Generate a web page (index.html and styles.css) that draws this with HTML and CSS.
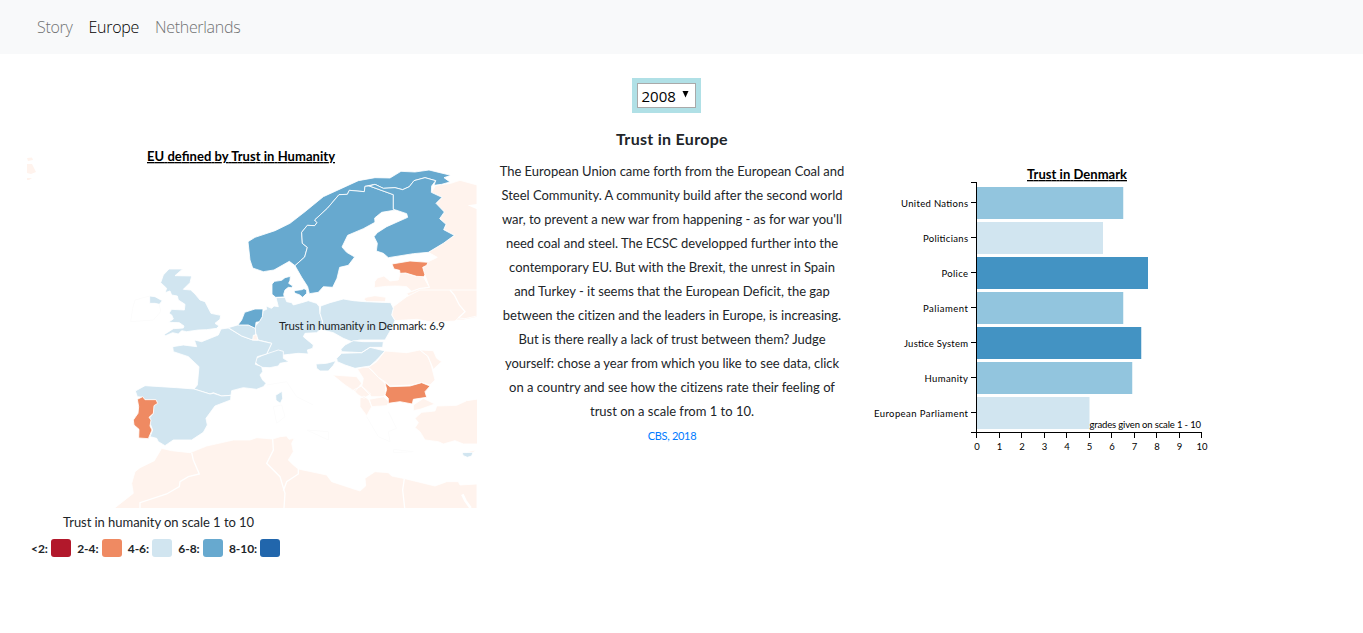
FILE: index.html
```html
<!DOCTYPE html>
<html lang="en">
<head>
<meta charset="utf-8">
<title>Trust in Europe</title>
<link rel="stylesheet" href="styles.css">
</head>
<body>
<nav class="navbar">
  <a class="nav-link">Story</a>
  <a class="nav-link active">Europe</a>
  <a class="nav-link">Netherlands</a>
</nav>
<main class="content">
  <section class="map-column">
    <svg class="map" viewBox="27 143 450 365" width="450" height="365">
      <g transform="translate(240 160) scale(.33333)">
        <path class="none" d="M574 97L587 76L632 70L660 61L711 75V480H560L500 400L540 385L568 382L555 345L548 322L565 305L592 292L565 277L643 226L611 209L618 193L599 176L613 156L588 130L606 112Z"/>
        <path class="sea" d="M683 136L711 132V148Z"/>
        <path class="none" d="M403 383L404 365L412 354L432 348L450 363L475 360L480 340L497 339L530 349L550 350L568 382L540 385L515 394L500 380L470 378L440 379Z"/>
        <path class="none" d="M372 418L378 412L405 407L438 412L436 425L380 425Z"/>
        <path class="high" d="M24 245L45 232L105 212L150 190L195 155L250 110L355 62L405 53L450 54L483 34L525 36L567 30L600 38L633 46L612 53L630 66L605 73L582 76L587 62L555 53L522 62L508 80L488 89L465 83L430 85L405 73L375 79L373 95L328 91L322 103L297 104L262 145L224 180L231 188L224 197L202 196L185 217L187 250L202 262L194 291L165 317L148 304L102 330L70 335L38 324L30 300Z"/>
        <path class="high" d="M165 317L194 291L202 262L187 250L185 217L202 196L224 197L231 188L224 180L262 145L297 104L322 103L328 91L373 95L375 79L388 78L460 104V148L467 150L425 157L404 174L405 187L370 206L323 226L306 261L320 277L344 291L325 316L299 322L291 355L278 382L250 380L235 397L208 401L203 380L185 352Z"/>
        <path class="high" d="M388 78L405 73L430 85L465 83L488 89L508 80L522 62L555 53L587 62L575 78L574 97L606 112L588 130L613 156L599 176L618 193L611 209L643 226L610 250L565 277L520 281L445 293L430 280L409 273L412 250L402 230L412 218L440 200L503 172L500 161L467 150L460 148V104Z"/>
        <path class="high" d="M96 372L104 364L125 361L135 353L151 349L150 361L146 370L158 378L155 383L145 382L135 390L131 403L133 411L107 412L96 403ZM162 392L185 389L192 386L200 390V400L188 412L178 404L165 400Z"/>
        <path class="low" d="M456 312L510 303L564 307L560 316L548 322L555 345L550 350L530 349L497 339L480 340L479 331L462 327Z"/>
      </g>
      <g transform="translate(220 290) scale(.33333)">
        <path class="none" d="M520 50L560 20L600 0H771V78L735 86L715 84L705 93L640 97L590 88L525 92L515 75Z"/>
        <path class="sea" d="M708 96L740 87L771 80V130H700Z"/>
        <path class="border" d="M690 0L703 15L718 45L735 65L715 84"/>
        <path class="mid" d="M129 62L140 58L138 48L155 55L162 48L175 50L168 23L195 22L200 35L215 38L220 45L245 38L265 32L290 40L298 50L300 70L308 95L305 115L290 128L255 130L250 140L280 165L278 175L262 180L265 192L235 190L190 195L165 190L140 192L155 160L115 150L108 135L104 110L118 95L127 80Z"/>
        <path class="mid" d="M302 48L330 38L370 27L400 32L435 35L512 38L520 55L515 75L525 92L515 115L495 150H420L395 155L370 145L340 128L308 120V95L300 70Z"/>
        <path class="mid" d="M106 218L108 205L130 195L175 180L190 184V205L207 215L180 220L175 228L150 233L125 232L115 225ZM363 178L375 165L400 152L430 155L490 155L488 172L450 172L425 188L365 185ZM350 205L365 190L425 188L450 172L495 183L470 210L450 228L405 235L375 225L352 215ZM288 222L320 220L348 212L340 226L325 243L300 243L290 235ZM167 316L186 304L188 325L181 340L168 331Z"/>
        <path class="none" d="M470 215L495 183L560 188L600 180L625 200L635 230L640 250L645 270L630 285L605 278L575 285L510 288L495 275L475 262L455 240L445 232ZM600 180L640 182L650 205L665 215L640 238L633 220L622 198Z"/>
        <path class="none" d="M412 237L430 232L445 232L475 262L495 280L498 310L490 320L455 320L425 290L430 265ZM338 255L410 260L425 280L405 305L375 285ZM400 300L425 288L452 312L432 325L415 315ZM448 328L490 320L508 335L500 347L455 350ZM420 325L432 318L447 330L455 350L440 377L420 350ZM580 345L610 325L645 342L600 358L580 362Z"/>
        <path class="low" d="M495 278L510 290L570 288L605 278L630 288L615 305L620 322L580 328L577 342L540 335L505 340V325L495 315L500 298Z"/>
      </g>
      <g transform="translate(120 260) scale(.33333)">
        <path class="mid" d="M147 27L188 27L165 47L215 48L210 68L190 88L212 90L225 102L240 120L255 125L273 160L302 166L300 178L285 190L297 198L290 205L260 209L235 210L200 215L185 212L175 222L158 218L137 227L132 224L160 206L190 204L192 198L178 188L145 187L160 177L155 165L147 160L155 148L193 150L195 133L175 120L172 108L155 105L150 93L135 98L140 85L122 68L130 45ZM89 108L105 110L127 122L118 133L105 130L89 130Z"/>
        <path class="mid" d="M303 207L325 204L365 228L398 240L415 241L455 250L440 282L412 290L406 313L425 320L428 335L420 345L428 360L438 370L430 380L410 388L370 383L335 392L333 406L305 408L280 398L270 402L222 387L232 375L237 320L205 290L160 275L158 260L190 255L230 260L223 240L245 245L295 225Z"/>
        <path class="mid" d="M325 203L356 194L385 195L406 205L407 222L398 240L365 228Z"/>
        <path class="none" d="M400 226L410 224L413 240L398 240Z"/>
        <path class="high" d="M354 195L365 180L374 157L405 147L429 147L427 170L418 185L408 187L406 205L385 195Z"/>
        <path class="faint" d="M89 108L45 120L38 145L32 185L100 180L122 155L118 133"/>
      </g>
      <g transform="translate(110 370) scale(.33333)">
        <path class="mid" d="M76 63L105 47L200 53L252 57L300 72L310 70L335 78L363 76L362 90L315 108L288 145L292 165L280 187L245 210H190L165 227L145 215L140 205L120 200L128 180L120 160V142L130 130V108L140 95L135 90H105L98 82L82 80Z"/>
        <path class="low" d="M82 88L98 80L105 89L138 89L143 100L132 107L130 130L117 142L123 150L120 168L126 180L115 206L86 204L87 178L72 165L70 150L84 130L86 110Z"/>
        <path class="none" d="M10 417L70 370L65 340L75 305L90 293L133 272L155 235L185 242L240 248L290 228L370 210H420L440 203L488 207L510 200L530 198L537 208L553 205L545 220L550 245L535 270L550 285L565 297L650 315L665 335L750 363L767 348L765 325L795 305L835 308L845 318L885 326L975 348L1010 335H1045L1050 345L1101 342V420Z"/>
        <path class="border" d="M245 248L250 270L268 312L235 320L210 335L208 350L170 372L90 398V414M488 207L490 240L470 280L510 320L525 370L522 414M520 362L530 335L565 312V297M883 326L878 360L884 414"/>
        <path class="gulf" d="M1057 373L1066 392L1082 414"/>
        <path class="faint" d="M470 45L530 35L560 80L610 105M490 110L515 105L525 140L500 160Z"/>
      </g>
      <g transform="translate(300 380) scale(.33333)">
        <path class="none" d="M345 115L365 97L405 93L410 78L470 76L500 62L535 57V192H490L465 182L430 192L415 185L375 180L360 155L345 143L355 128ZM500 215L527 210L518 219Z"/>
        <path class="mid" d="M486 218L519 217L515 228L502 232L490 227Z"/>
        <path class="faint" d="M200 110L235 170L270 185L265 155L290 145L265 95M20 150L85 180V155ZM280 208L340 215L280 218Z"/>
      </g>
      <path class="none" d="M27 158L32 157.500L33 160L28 161ZM27 164L32 164L36 172L31 174L27 173ZM27 178L32 178L29 180L27 180Z"/>
      <text class="svg-title" x="147" y="161" textLength="188">EU defined by Trust in Humanity</text>
      <text class="tip" x="279" y="330" textLength="166">Trust in humanity in Denmark: 6.9</text>
    </svg>
    <p class="legend-title">Trust in humanity on scale 1 to 10</p>
    <div class="legend">
      <span class="key">&lt;2:</span><i class="swatch s1"></i>
      <span class="key">2-4:</span><i class="swatch s2"></i>
      <span class="key">4-6:</span><i class="swatch s3"></i>
      <span class="key">6-8:</span><i class="swatch s4"></i>
      <span class="key">8-10:</span><i class="swatch s5"></i>
    </div>
  </section>
  <section class="story">
    <div class="picker"><div class="select">2008<svg width="8" height="7" viewBox="0 0 8 7"><path d="M.5 0H6.500L3.500 6.500Z"/></svg></div></div>
    <h1 class="heading">Trust in Europe</h1>
    <p class="body-text">The European Union came forth from the European Coal and<br>Steel Community. A community build after the second world<br>war, to prevent a new war from happening - as for war you'll<br>need coal and steel. The ECSC developped further into the<br>contemporary EU. But with the Brexit, the unrest in Spain<br>and Turkey - it seems that the European Deficit, the gap<br>between the citizen and the leaders in Europe, is increasing.<br>But is there really a lack of trust between them? Judge<br>yourself: chose a year from which you like to see data, click<br>on a country and see how the citizens rate their feeling of<br>trust on a scale from 1 to 10.</p>
    <a class="source">CBS, 2018</a>
  </section>
  <section class="chart-column">
    <svg class="chart" viewBox="867 160 350 300" width="350" height="300">
      <text class="svg-title" x="1027" y="179" textLength="100">Trust in Denmark</text>
      <g>
        <rect class="b2" x="977" y="187" width="146.250" height="32"/>
        <rect class="b1" x="977" y="222" width="126" height="32"/>
        <rect class="b3" x="977" y="257" width="171" height="32"/>
        <rect class="b2" x="977" y="292" width="146.250" height="32"/>
        <rect class="b3" x="977" y="327" width="164.250" height="32"/>
        <rect class="b2" x="977" y="362" width="155.250" height="32"/>
        <rect class="b1" x="977" y="397" width="112.500" height="32"/>
      </g>
      <path class="axis" d="M971 182.500H976.500V432.500H971M971 202.500H976M971 237.500H976M971 272.500H976M971 307.500H976M971 342.500H976M971 377.500H976M971 412.500H976M976.500 438V432.500H1201.500V438M999.500 432V438M1021.500 432V438M1044.500 432V438M1066.500 432V438M1089.500 432V438M1111.500 432V438M1134.500 432V438M1156.500 432V438M1179.500 432V438"/>
      <g class="ylabels">
        <text x="901" y="207" textLength="67">United Nations</text>
        <text x="923" y="242" textLength="45">Politicians</text>
        <text x="941.500" y="277" textLength="26.500">Police</text>
        <text x="923" y="312" textLength="45">Paliament</text>
        <text x="904" y="347" textLength="64">Justice System</text>
        <text x="924.500" y="382" textLength="43.500">Humanity</text>
        <text x="874" y="417" textLength="94">European Parliament</text>
        <text x="1089.500" y="428" textLength="111.500">grades given on scale 1 - 10</text>
      </g>
      <g class="xlabels">
        <text x="977" y="450">0</text><text x="999.500" y="450">1</text><text x="1022" y="450">2</text><text x="1044.500" y="450">3</text><text x="1067" y="450">4</text><text x="1089.500" y="450">5</text><text x="1112" y="450">6</text><text x="1134.500" y="450">7</text><text x="1157" y="450">8</text><text x="1179.500" y="450">9</text><text x="1202" y="450">10</text>
      </g>
    </svg>
  </section>
</main>
</body>
</html>
```
FILE: styles.css
```css
* { box-sizing: border-box; }
body { margin: 0; background: #fff; color: #212529; font-family: Lato, "Liberation Sans", sans-serif; }
svg { display: block; }
.navbar { display: flex; gap: 16px; height: 54px; padding: 0 37px 1px; align-items: center; background: #f8f9fa; font: 300 16px "Open Sans", "Noto Sans", sans-serif; letter-spacing: -.3px; }
.nav-link { color: #717273; }
.nav-link.active { color: #000; }
.content { display: grid; grid-template-columns: 450px 390px 350px; padding-left: 27px; }
.map-column { padding-top: 89px; }
.none { fill: #fff3ed; stroke: #fff; stroke-width: 2.500; }
.mid { fill: #d1e5f0; stroke: #fff; stroke-width: 2.500; }
.high { fill: #67a9cf; stroke: #fff; stroke-width: 2.500; }
.low { fill: #ef8a62; stroke: #fff; stroke-width: 2.500; }
.map > .none { stroke: none; }
.sea { fill: #fff; }
.border { fill: none; stroke: #fff; stroke-width: 4; }
.gulf { fill: none; stroke: #fff; stroke-width: 8; }
.faint { fill: none; stroke: #fcfcfc; stroke-width: 3; }
.svg-title { fill: #000; font-size: 13px; font-weight: 700; text-decoration: underline; }
.tip { fill: #212529; font-size: 11.5px; }
.legend-title { margin: 5px 0 0; padding-left: 36px; font-size: 13px; line-height: 18px; letter-spacing: -.05px; }
.legend { display: flex; align-items: center; height: 18px; margin-top: 8px; padding-left: 4px; font-size: 12px; font-weight: 700; }
.key { margin-right: 3.300px; white-space: nowrap; letter-spacing: -.05px; }
.swatch { width: 20px; height: 18px; margin-right: 6px; border-radius: 3px; flex: none; }
.s1 { background: #b2182b; }
.s2 { background: #ef8a62; }
.s3 { background: #d1e5f0; }
.s4 { background: #67a9cf; }
.s5 { background: #2166ac; }
.story { display: flex; flex-direction: column; align-items: center; padding-top: 24px; }
.picker { margin-right: 12px; padding: 5px; background: #b0e0e6; }
.select { display: flex; width: 59px; height: 25px; padding-left: 4px; gap: 6px; align-items: center; border: 1px solid #a9a9a9; background: #fff; color: #000; font: 15px "Open Sans", sans-serif; }
.select svg { margin-top: -2px; }
.heading { margin: 16px 0 0; font-size: 16px; line-height: 20px; letter-spacing: .3px; }
.body-text { margin: 10px 0 0; font-size: 13px; line-height: 24px; text-align: center; white-space: nowrap; letter-spacing: -.01px; }
.source { margin-top: 5px; color: #007bff; font-size: 11px; line-height: 16px; letter-spacing: -.3px; }
.chart-column { padding-top: 106px; }
.b1 { fill: #d1e5f0; }
.b2 { fill: #92c5de; }
.b3 { fill: #4393c3; }
.axis { fill: none; stroke: #000; shape-rendering: crispEdges; }
.ylabels { font-size: 9.500px; fill: #000; }
.xlabels { font-size: 9.500px; fill: #000; text-anchor: middle; }
```
